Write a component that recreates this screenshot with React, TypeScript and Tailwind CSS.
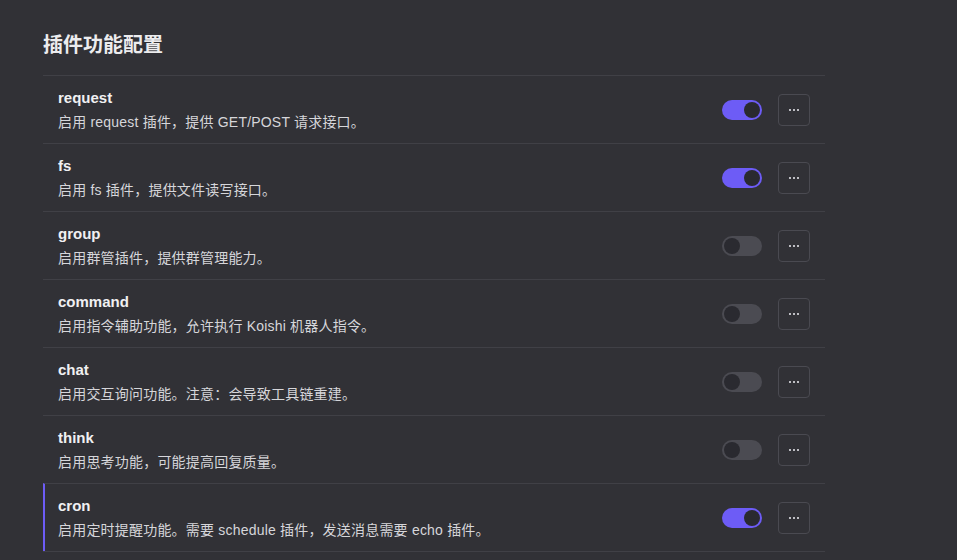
import React from "react";

interface Plugin {
  name: string;
  desc: string;
  enabled: boolean;
  active?: boolean;
}

const plugins: Plugin[] = [
  { name: "request", desc: "启用 request 插件，提供 GET/POST 请求接口。", enabled: true },
  { name: "fs", desc: "启用 fs 插件，提供文件读写接口。", enabled: true },
  { name: "group", desc: "启用群管插件，提供群管理能力。", enabled: false },
  { name: "command", desc: "启用指令辅助功能，允许执行 Koishi 机器人指令。", enabled: false },
  { name: "chat", desc: "启用交互询问功能。注意：会导致工具链重建。", enabled: false },
  { name: "think", desc: "启用思考功能，可能提高回复质量。", enabled: false },
  { name: "cron", desc: "启用定时提醒功能。需要 schedule 插件，发送消息需要 echo 插件。", enabled: true, active: true },
];

function Toggle({ on }: { on: boolean }) {
  return (
    <div
      className={`w-10 h-5 rounded-full flex items-center px-[2px] ${
        on ? "bg-[#6d5cf6] justify-end" : "bg-[#4b4b52] justify-start"
      }`}
    >
      <div className="w-4 h-4 rounded-full bg-[#2a2a30]" />
    </div>
  );
}

function MoreButton() {
  return (
    <button
      type="button"
      className="w-8 h-8 rounded-[4px] border border-[#4a4a51] flex items-center justify-center gap-[2px]"
    >
      <span className="w-[2px] h-[2px] bg-[#bdbdc2]" />
      <span className="w-[2px] h-[2px] bg-[#bdbdc2]" />
      <span className="w-[2px] h-[2px] bg-[#bdbdc2]" />
    </button>
  );
}

export default function App() {
  return (
    <div
      className="w-[957px] h-[560px] overflow-hidden bg-[#313136] text-[#e6e6e8]"
      style={{ fontFamily: '"Liberation Sans", "Noto Sans CJK SC", sans-serif' }}
    >
      <div className="ml-[43px] w-[782px] pt-[31px]">
        <h1 className="text-[20px] leading-[28px] font-bold text-[#ececee] mb-4">插件功能配置</h1>
        <div className="border-b border-[#404046]">
          {plugins.map((p) => (
            <div
              key={p.name}
              className={`h-[68px] border-t border-[#404046] flex items-center justify-between pr-[15px] ${
                p.active ? "border-l-2 border-l-[#6d5cf6] pl-[13px]" : "pl-[15px]"
              }`}
            >
              <div>
                <div className="text-[15px] leading-[24px] font-bold text-[#f0f0f2]">{p.name}</div>
                <div className="text-[14px] leading-[24px] tracking-[0.2px] text-[#d6d6da]">{p.desc}</div>
              </div>
              <div className="flex items-center gap-4">
                <Toggle on={p.enabled} />
                <MoreButton />
              </div>
            </div>
          ))}
        </div>
      </div>
    </div>
  );
}
